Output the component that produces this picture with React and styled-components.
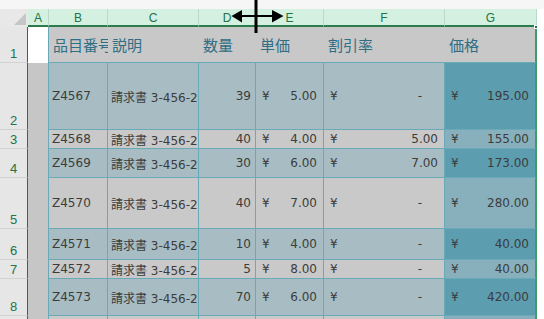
import React from 'react';
import styled, { createGlobalStyle } from 'styled-components';

const GlobalStyle = createGlobalStyle`
  html, body { margin: 0; padding: 0; background: #fff; }
  body { width: 544px; height: 319px; overflow: hidden; }
  * { box-sizing: border-box; }
`;

const TEMPLATE = '28px 21px 59px 91px 57px 68px 121px 92px 1fr';
const TEAL = '#6aa9b8';
const SEL_GREEN = '#3f9a68';

const Sheet = styled.div`
  position: relative;
  width: 544px;
  height: 319px;
  overflow: hidden;
  background: #fff;
  font-family: "DejaVu Sans", "Noto Sans CJK JP", sans-serif;
`;

const TopStrip = styled.div`
  height: 9px;
  background: #f6f6f6;
`;

const Row = styled.div`
  display: grid;
  grid-template-columns: ${TEMPLATE};
  height: ${(p) => p.$h}px;
`;

const Corner = styled.div`
  background: #e8e8e8;
  display: flex;
`;

const ColHeader = styled.div`
  background: #d3f0e0;
  color: #217346;
  font: 12px/13px "Liberation Sans", Arial, sans-serif;
  display: flex;
  align-items: flex-end;
  justify-content: center;
  padding-bottom: 0;
  border-right: 1px solid #b7d9c5;
  border-bottom: 2px solid #2a7c4f;
`;

const Filler = styled.div`
  background: #fff;
`;

const RowHeader = styled.div`
  background: #e6e6e6;
  color: #217346;
  font: 13px "Liberation Sans", Arial, sans-serif;
  display: flex;
  align-items: flex-end;
  justify-content: center;
  padding-bottom: 1px;
  border-bottom: 1px solid #d2d2d2;
  border-right: 1px solid #217346;
`;

const ACell = styled.div`
  background: ${(p) => (p.$active ? '#fff' : '#c6c6c6')};
  border-right: 1px solid ${TEAL};
`;

const Cell = styled.div`
  background: ${(p) => p.$bg};
  border-bottom: 1px solid ${TEAL};
  border-right: ${(p) => (p.$last ? `2px solid ${SEL_GREEN}` : p.$noRight ? 'none' : `1px solid ${TEAL}`)};
  display: flex;
  align-items: center;
  justify-content: ${(p) => p.$justify || 'flex-start'};
  padding: 0 ${(p) => p.$pr ?? 3}px 0 ${(p) => p.$pl ?? 3}px;
  overflow: hidden;
  white-space: nowrap;
  color: #3c3c3c;
  font-size: 12px;
`;

const HeadCell = styled(Cell)`
  color: #2f6e85;
  font-size: 15px;
  font-family: "Noto Sans CJK JP", sans-serif;
  padding-left: 4px;
`;

const Yen = styled.span`
  flex: 0 0 auto;
`;

const Amount = styled.span`
  margin-left: auto;
  padding-right: ${(p) => (p.$dash ? 16 : 0)}px;
`;

const Handle = styled.div`
  position: absolute;
  left: 534px;
  top: 25px;
  width: 4px;
  height: 4px;
  background: #1f6b42;
  border: 1px solid #fff;
`;

const CursorArt = styled.svg`
  position: absolute;
  left: 228px;
  top: 0;
`;

const rows = [
  { n: 2, h: 67, code: 'Z4567', qty: 39, price: '5.00', disc: null, total: '195.00' },
  { n: 3, h: 19, code: 'Z4568', qty: 40, price: '4.00', disc: '5.00', total: '155.00' },
  { n: 4, h: 29, code: 'Z4569', qty: 30, price: '6.00', disc: '7.00', total: '173.00' },
  { n: 5, h: 51, code: 'Z4570', qty: 40, price: '7.00', disc: null, total: '280.00' },
  { n: 6, h: 31, code: 'Z4571', qty: 10, price: '4.00', disc: null, total: '40.00' },
  { n: 7, h: 19, code: 'Z4572', qty: 5, price: '8.00', disc: null, total: '40.00' },
  { n: 8, h: 37, code: 'Z4573', qty: 70, price: '6.00', disc: null, total: '420.00' },
];

const Money = ({ value, bg, last }) => (
  <Cell $bg={bg} $pl={6} $pr={6} $last={last}>
    <Yen>¥</Yen>
    <Amount $dash={!value}>{value || '-'}</Amount>
  </Cell>
);

export default function App() {
  return (
    <Sheet>
      <GlobalStyle />
      <TopStrip />
      <Row $h={18}>
        <Corner>
          <svg width="28" height="18" viewBox="0 0 28 18">
            <polygon points="26,4 26,16 14,16" fill="#c6c6c6" />
          </svg>
        </Corner>
        {['A', 'B', 'C', 'D', 'E', 'F', 'G'].map((c) => (
          <ColHeader key={c}>{c}</ColHeader>
        ))}
        <Filler />
      </Row>
      <Row $h={36}>
        <RowHeader>1</RowHeader>
        <ACell $active />
        <HeadCell $bg="#c8c8c8" $noRight>品目番号</HeadCell>
        <HeadCell $bg="#c8c8c8" $noRight>説明</HeadCell>
        <HeadCell $bg="#c8c8c8" $noRight>数量</HeadCell>
        <HeadCell $bg="#c8c8c8" $noRight>単価</HeadCell>
        <HeadCell $bg="#c8c8c8" $noRight>割引率</HeadCell>
        <HeadCell $bg="#c8c8c8" $last>価格</HeadCell>
        <Filler />
      </Row>
      {rows.map((r) => {
        const blue = r.n % 2 === 0;
        const bg = blue ? '#a7bdc3' : '#c9c9c9';
        const gbg = blue ? '#5d9db0' : '#87b0bc';
        return (
          <Row key={r.n} $h={r.h}>
            <RowHeader>{r.n}</RowHeader>
            <ACell />
            <Cell $bg={bg}>{r.code}</Cell>
            <Cell $bg={bg}>請求書 3-456-2345</Cell>
            <Cell $bg={bg} $justify="flex-end" $pr={4}>{r.qty}</Cell>
            <Money value={r.price} bg={bg} />
            <Money value={r.disc} bg={bg} />
            <Money value={r.total} bg={gbg} last />
            <Filler />
          </Row>
        );
      })}
      <Row $h={30}>
        <RowHeader>9</RowHeader>
        <ACell />
        <Cell $bg="#c9c9c9" />
        <Cell $bg="#c9c9c9" />
        <Cell $bg="#c9c9c9" />
        <Cell $bg="#c9c9c9" />
        <Cell $bg="#c9c9c9" />
        <Cell $bg="#87b0bc" $last />
        <Filler />
      </Row>
      <Handle />
      <CursorArt width="60" height="36" viewBox="0 0 60 36">
        <rect x="26.5" y="0" width="3" height="33" fill="#000" />
        <rect x="13" y="15" width="32" height="2" fill="#000" />
        <polygon points="3.5,16 14,10 14,22.5" fill="#000" />
        <polygon points="55.5,16 44,10 44,22.5" fill="#000" />
      </CursorArt>
    </Sheet>
  );
}
